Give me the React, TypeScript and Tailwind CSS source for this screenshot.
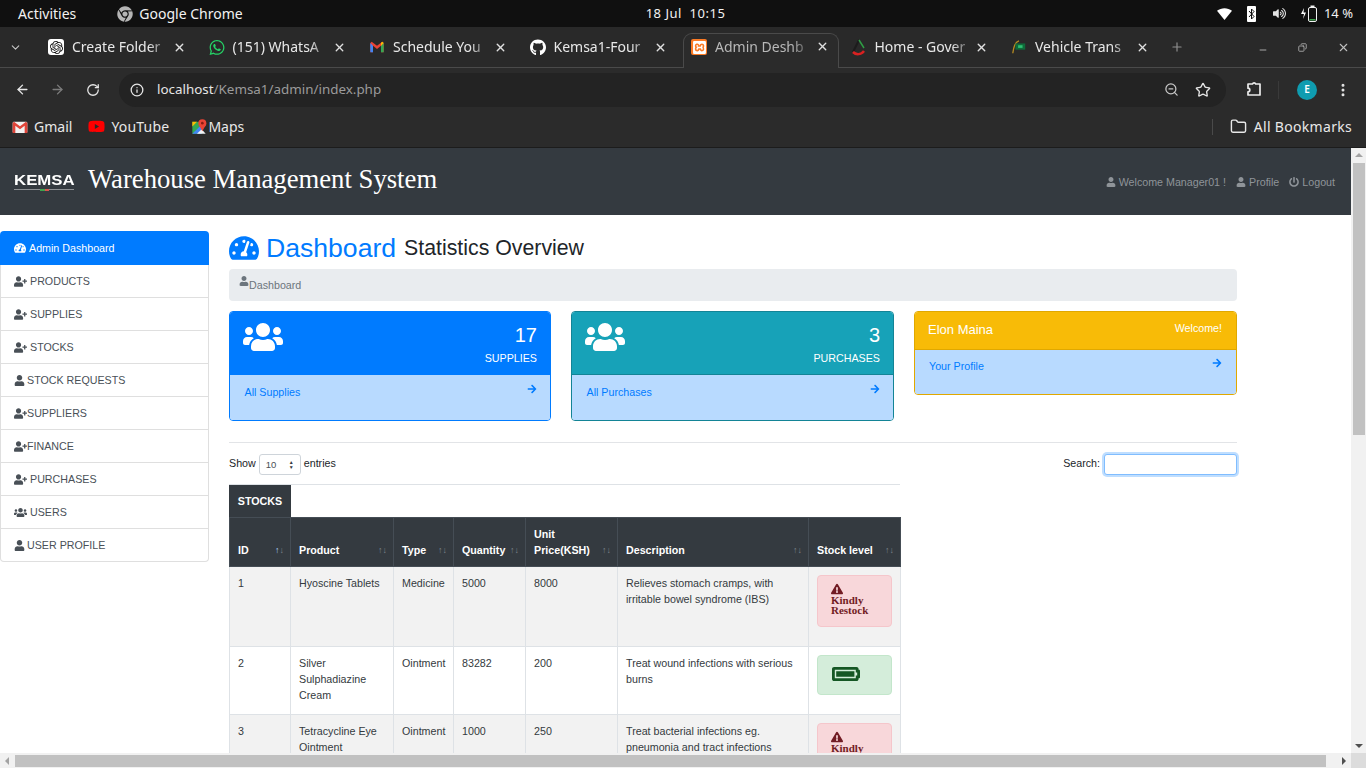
import { ArrowLeft, ArrowRight, ChevronDown, Copy, Folder, Info, Minus, MoreVertical, Plus, RotateCw, Star, X, ZoomOut } from 'lucide-react';
import { FaChrome, FaGithub, FaWhatsapp, FaYoutube } from 'react-icons/fa';
import { FaArrowRight, FaBatteryFull, FaExclamationTriangle, FaPowerOff, FaTachometerAlt, FaUser, FaUserPlus, FaUsers, FaVolumeUp } from 'react-icons/fa';
import { SiOpenai, SiXampp } from 'react-icons/si';

const chromeFont = 'font-["Noto_Sans",sans-serif]';

function GmailIcon({ size = 16 }: { size?: number }) {
  return (
    <svg width={size} height={size} viewBox="0 0 24 24">
      <path d="M2 6v14h4V10l6 5 6-5v10h4V6l-2-2-8 6-8-6z" fill="#ea4335" />
      <path d="M2 6v14h4V10z" fill="#4285f4" />
      <path d="M18 10v10h4V6z" fill="#34a853" />
      <path d="M18 10l4-4-2-2-2 1.500z" fill="#fbbc04" />
    </svg>
  );
}

// the bookmark bar shows the older envelope version of the gmail icon
function GmailBookmarkIcon() {
  return (
    <svg width="16" height="16" viewBox="0 0 24 24">
      <rect x="1" y="4" width="22" height="17" rx="2" fill="#f2f2f2" />
      <path d="M1 6v15h4V10l7 5.500 7-5.500v11h4V6l-2-2-9 7-9-7z" fill="#e0453a" />
    </svg>
  );
}

function MapsIcon() {
  return (
    <svg width="16" height="17" viewBox="0 0 24 24" className="ml-[22px]">
      <path d="M2 5h14v18H2z" fill="#34a853" />
      <path d="M2 23L16 9v14z" fill="#4285f4" />
      <path d="M2 5h7L2 12z" fill="#fbbc04" />
      <path d="M9 23l7-7 6 7z" fill="#f1f3f4" />
      <circle cx="17" cy="7" r="6" fill="#ea4335" />
      <path d="M12 10l5 9 5-9z" fill="#ea4335" />
      <circle cx="17" cy="7" r="2" fill="#8c1c13" />
    </svg>
  );
}

function HomeFavicon() {
  return (
    <svg width="16" height="18" viewBox="0 0 16 18" fill="none">
      <path d="M8 2L2 14" stroke="#1c1c1c" strokeWidth="2" />
      <path d="M8 2l5 8" stroke="#2f9e44" strokeWidth="1.500" />
      <path d="M2 14c3 3 8 3 11-1" stroke="#d92121" strokeWidth="2.500" />
    </svg>
  );
}

function VehicleFavicon() {
  return (
    <svg width="18" height="18" viewBox="0 0 18 18" fill="none">
      <path d="M2 16C3 8 5 3 9 2" stroke="#b58b22" strokeWidth="1.500" />
      <rect x="5" y="5" width="11" height="7" fill="#0f6b3a" />
      <rect x="8" y="7" width="5" height="3" fill="#2fbf71" />
    </svg>
  );
}

// chrome's extensions button, lucide's puzzle is a different shape
function ExtensionIcon() {
  return (
    <svg width="18" height="18" viewBox="0 0 18 18" fill="none" stroke="#ececec" strokeWidth="1.700" strokeLinejoin="round" className="ml-[19px]">
      <path d="M3 3h4.500a1.700 1.700 0 0 1 3.200 0H15v11H3v-3.200a1.800 1.800 0 0 0 0-3.600z" />
    </svg>
  );
}

const tabs = [
  { title: 'Create Folder', icon: <span className="flex h-[16px] w-[16px] items-center justify-center rounded-[3px] bg-white"><SiOpenai size={13} color="#111" /></span> },
  { title: '(151) WhatsA', icon: <FaWhatsapp size={17} color="#25d366" /> },
  { title: 'Schedule You', icon: <GmailIcon /> },
  { title: 'Kemsa1-Four', icon: <FaGithub size={17} color="#fff" /> },
  { title: 'Admin Deshb', icon: <span className="flex h-[16px] w-[16px] items-center justify-center rounded-[2px] bg-[#fb7a24]"><SiXampp size={13} color="#fff" /></span>, active: true },
  { title: 'Home - Gover', icon: <HomeFavicon /> },
  { title: 'Vehicle Trans', icon: <VehicleFavicon /> },
];

const sideItems = [
  { label: 'PRODUCTS', icon: <FaUserPlus size={13} />, gap: 'ml-[3px]' },
  { label: 'SUPPLIES', icon: <FaUserPlus size={13} />, gap: 'ml-[3px]' },
  { label: 'STOCKS', icon: <FaUserPlus size={13} />, gap: 'ml-[3px]' },
  { label: 'STOCK REQUESTS', icon: <FaUser size={11} />, gap: 'ml-[2px]' },
  { label: 'SUPPLIERS', icon: <FaUserPlus size={13} />, gap: '' },
  { label: 'FINANCE', icon: <FaUserPlus size={13} />, gap: '' },
  { label: 'PURCHASES', icon: <FaUserPlus size={13} />, gap: 'ml-[3px]' },
  { label: 'USERS', icon: <FaUsers size={13} />, gap: 'ml-[3px]' },
  { label: 'USER PROFILE', icon: <FaUser size={11} />, gap: 'ml-[2px]' },
];

const columns = [
  { label: 'ID', width: 'w-[61px]', active: true },
  { label: 'Product', width: 'w-[103px]' },
  { label: 'Type', width: 'w-[60px]' },
  { label: 'Quantity', width: 'w-[72px]' },
  { label: 'Unit Price(KSH)', width: 'w-[92px]' },
  { label: 'Description', width: 'w-[191px]' },
  { label: 'Stock level', width: 'w-[92px]' },
];

const rows = [
  { id: 1, product: 'Hyoscine Tablets', type: 'Medicine', qty: '5000', price: '8000', desc: 'Relieves stomach cramps, with irritable bowel syndrome (IBS)', low: true, h: 'h-[80px]' },
  { id: 2, product: 'Silver Sulphadiazine Cream', type: 'Ointment', qty: '83282', price: '200', desc: 'Treat wound infections with serious burns', low: false, h: 'h-[68px]' },
  { id: 3, product: 'Tetracycline Eye Ointment', type: 'Ointment', qty: '1000', price: '250', desc: 'Treat bacterial infections eg. pneumonia and tract infections', low: true, h: 'h-[80px]' },
];

function StatCard({ count, label, link, head, border }: { count: string; label: string; link: string; head: string; border: string }) {
  return (
    <div className={`h-[110px] overflow-hidden rounded-[4px] border ${border}`}>
      <div className={`flex h-[62px] justify-between px-[13px] pt-[9px] text-white ${head}`}>
        <FaUsers size={40} className="-mt-[4px]" />
        <div className="text-right">
          <div className="text-[20px] leading-[28px]">{count}</div>
          <div className="mt-[1px] leading-[16px]">{label}</div>
        </div>
      </div>
      <div className={`flex h-[46px] items-start justify-between border-t bg-[#b8daff] pl-[14px] pr-[14px] pt-[9px] leading-[16px] text-[#007bff] ${border}`}>
        <span className="ml-[0.500px]">{link}</span>
        <FaArrowRight size={10} className="mr-[-1px]" />
      </div>
    </div>
  );
}

function StockBadge({ low }: { low: boolean }) {
  if (low) {
    return (
      <div className="h-[52px] rounded-[4px] border border-[#f5c6cb] bg-[#f8d7da] px-[13px] pt-[7px] font-['Liberation_Serif',serif] text-[11px] leading-[10px] font-bold text-[#721c24]">
        <FaExclamationTriangle size={12} />
        <div>Kindly<br />Restock</div>
      </div>
    );
  }
  return (
    <div className="h-[40px] rounded-[4px] border border-[#c3e6cb] bg-[#d4edda] px-[14px] pt-[4px] text-[#155724]">
      <FaBatteryFull size={28} />
    </div>
  );
}

function SortArrows({ active }: { active?: boolean }) {
  return (
    <span className="-mr-[2px] ml-auto flex shrink-0 self-end pb-[2px] text-[9px] leading-[12px] text-[#7d858c]">
      <span className={active ? 'text-[#a9d0f8]' : ''}>↑</span>
      <span>↓</span>
    </span>
  );
}

export default function App() {
  return (
    <div className="flex h-screen w-full flex-col overflow-hidden bg-white">
      {/* ubuntu top bar */}
      <div className={`flex h-[27px] shrink-0 items-center bg-[#101010] text-[14px] text-[#f2f2f2] ${chromeFont}`}>
        <div className="flex flex-1 items-center pl-[18px]">
          <span>Activities</span>
          <FaChrome size={16} className="ml-[41px] text-[#b5b5b5]" />
          <span className="ml-[6px]">Google Chrome</span>
        </div>
        <div className="text-[13px] tracking-[0.5px]">18 Jul&nbsp;&nbsp;10:15</div>
        <div className="flex flex-1 items-center justify-end gap-[10px] pr-[13px]">
          <svg width="15" height="12" viewBox="0 0 14 11"><path d="M0 2.500C4-.8 10-.8 14 2.500L7 11z" fill="#fff" /></svg>
          <span className="ml-[5px] flex h-[16px] w-[9px] items-center justify-center rounded-[1px] bg-white">
            <svg width="7" height="12" viewBox="0 0 7 12" fill="none" stroke="#111" strokeWidth="1"><path d="M1 3l5 5.500-2.500 2.500V1L6 3.500 1 9" /></svg>
          </span>
          <FaVolumeUp size={13} className="ml-[7px] text-[#e4e4e4]" />
          <svg className="ml-[4px]" width="22" height="17" viewBox="0 0 22 17" fill="none">
            <path d="M4 3L1 9h3l-1 5 3-6.500H3.500z" fill="#fff" />
            <rect x="8.500" y="2.500" width="8" height="14" rx="1.500" stroke="#f2f2f2" />
            <rect x="10.500" y="0.500" width="4" height="2" fill="#f2f2f2" />
            <rect x="9.500" y="14" width="6" height="1.500" fill="#3fa34d" />
          </svg>
          <span className="-ml-[8px] text-[13px]">14 %</span>
        </div>
      </div>

      {/* tab strip */}
      <div className={`flex h-[40px] shrink-0 items-start bg-[#292929] pt-[6px] text-[14px] text-[#e8e8e8] ${chromeFont}`}>
        <div className="flex h-[28px] w-[36px] items-center justify-center text-[#c7c7c7]">
          <ChevronDown size={13} className="ml-[-6px]" />
        </div>
        {tabs.map((tab) => (
          <div
            key={tab.title}
            className={tab.active
              ? 'relative z-10 ml-[5px] flex h-[35px] w-[155.500px] items-start rounded-t-[9px] border border-b-0 border-[#4a4a4a] bg-[#2b2b2b] pl-[7px] pr-[9px] pt-[3px] text-[#b8b8b8]'
              : 'flex h-[28px] w-[160.500px] items-center pl-[12px] pr-[11px]'}
          >
            <span className="flex h-[20px] w-[16px] shrink-0 items-center justify-center">{tab.icon}</span>
            <span className="ml-[8px] w-[90px] overflow-hidden whitespace-nowrap leading-[20px] [mask-image:linear-gradient(to_right,#000_85%,#0006)]">{tab.title}</span>
            <X size={13} strokeWidth={2.5} className={tab.active ? 'ml-auto mt-[3px] text-[#e0e0e0]' : 'ml-auto text-[#e0e0e0]'} />
          </div>
        ))}
        <div className="flex h-[28px] flex-1 items-center text-[#8f8f8f]">
          <Plus size={14} strokeWidth={2} className="ml-[10px]" />
          <div className="ml-auto flex items-center gap-[30px] pr-[16px] text-[#c0c0c0]">
            <Minus size={10} className="mt-[5px]" />
            <Copy size={9} className="-scale-x-100" />
            <X size={13} />
          </div>
        </div>
      </div>

      {/* toolbar */}
      <div className={`flex h-[44px] shrink-0 items-center border-t border-[#4a4a4a] bg-[#2b2b2b] pl-[15px] pr-[15px] text-[#e6e6e6] ${chromeFont}`}>
        <ArrowLeft size={15} strokeWidth={2.2} />
        <ArrowRight size={15} strokeWidth={2.2} className="ml-[20px] text-[#7c7c7c]" />
        <RotateCw size={14} strokeWidth={2.2} className="ml-[21px]" />
        <div className="ml-[19px] flex h-[34px] w-[1107px] items-center rounded-full bg-[#232323] pl-[11px] pr-[15px]">
          <Info size={14} strokeWidth={2.2} />
          <span className="ml-[13px] text-[13.400px]">localhost<span className="text-[#9b9b9b]">/Kemsa1/admin/index.php</span></span>
          <ZoomOut size={15} className="ml-auto text-[#c8c8c8]" />
          <Star size={16} className="ml-[16px]" />
        </div>
        <ExtensionIcon />
        <span className="ml-[15px] h-[18px] w-px bg-[#3a3a3a]" />
        <span className="ml-[18px] flex h-[20px] w-[20px] items-center justify-center rounded-full bg-[#0f9cb0] text-[10px] font-semibold text-white">E</span>
        <MoreVertical size={16} strokeWidth={2.5} className="ml-[18px]" />
      </div>

      {/* bookmarks */}
      <div className={`flex h-[37px] shrink-0 items-center border-b border-[#1c1c1c] bg-[#2b2b2b] pb-[5px] pl-[12px] pr-[14px] text-[14px] text-[#e8e8e8] ${chromeFont}`}>
        <GmailBookmarkIcon />
        <span className="ml-[6px]">Gmail</span>
        <FaYoutube size={17} color="#f00" className="ml-[16px]" />
        <span className="ml-[6px] tracking-[0.2px]">YouTube</span>
        <MapsIcon />
        <span className="ml-[1px]">Maps</span>
        <span className="ml-auto h-[16px] w-px bg-[#4a4a4a]" />
        <Folder size={17} className="ml-[17px]" />
        <span className="ml-[7px] tracking-[0.3px]">All Bookmarks</span>
      </div>

      {/* page */}
      <div className="flex min-h-0 flex-1 flex-col">
        <div className="flex min-h-0 flex-1">
          <div className="min-w-0 flex-1 overflow-hidden font-['Liberation_Sans',sans-serif] text-[10.700px] leading-[16px] text-[#212529]">
            <header className="flex h-[67px] items-center bg-[#343a40] pl-[14px] pr-[16px]">
              <div className="w-[60px] text-white">
                <div className="origin-left scale-x-[1.12] text-[15px] leading-[14px] font-bold">KEMSA</div>
                <div className="mt-[2px] flex h-px w-[60px] justify-center bg-[#8d9094]">
                  <span className="h-[2px] w-[5px] bg-[#3fa34d]" />
                  <span className="h-[2px] w-[4px] bg-[#d9534f]" />
                </div>
              </div>
              <h1 className="-mt-[6px] ml-[14px] font-['Liberation_Serif',serif] text-[26.700px] leading-[32px] text-white">Warehouse Management System</h1>
              <nav className="ml-auto flex items-center text-[#8f9499]">
                <FaUser size={10} />
                <span className="ml-[3px]">Welcome Manager01 !</span>
                <FaUser size={10} className="ml-[10px]" />
                <span className="ml-[3px]">Profile</span>
                <FaPowerOff size={10} className="ml-[10px]" />
                <span className="ml-[3px]">Logout</span>
              </nav>
            </header>

            <div className="flex pt-[16px]">
              <aside className="w-[209px] shrink-0">
                <div className="flex h-[34px] items-center rounded-t-[4px] bg-[#007bff] pl-[14px] text-white">
                  <FaTachometerAlt size={12} />
                  <span className="ml-[3px]">Admin Dashboard</span>
                </div>
                <div className="rounded-b-[4px] border border-t-0 border-[#dfdfdf] text-[#495057]">
                  {sideItems.map((item) => (
                    <div key={item.label} className="flex h-[33px] items-center border-b border-[#dfdfdf] pl-[13px] last:h-[32px] last:border-b-0">
                      {item.icon}
                      <span className={item.gap}>{item.label}</span>
                    </div>
                  ))}
                </div>
              </aside>

              <main className="ml-[20px] w-[1008px] shrink-0">
                <div className="flex h-[34px] items-center">
                  <FaTachometerAlt size={30} className="text-[#007bff]" />
                  <span className="ml-[7px] text-[26.600px] leading-[32px] text-[#007bff]">Dashboard</span>
                  <span className="ml-[8px] text-[21.300px] leading-[32px]">Statistics Overview</span>
                </div>
                <div className="mt-[4px] flex h-[32px] rounded-[4px] bg-[#e9ecef] pl-[10px] pt-[8px] text-[#6c757d]">
                  <FaUser size={10} className="-mt-[1px]" />
                  <span>Dashboard</span>
                </div>

                <div className="mt-[10px] grid grid-cols-[322px_323px_323px] items-start gap-[20px]">
                  <StatCard count="17" label="SUPPLIES" link="All Supplies" head="bg-[#007bff]" border="border-[#007bff]" />
                  <StatCard count="3" label="PURCHASES" link="All Purchases" head="bg-[#17a2b8]" border="border-[#138496]" />
                  <div className="h-[84px] overflow-hidden rounded-[4px] border border-[#e0a800]">
                    <div className="flex h-[37px] items-start justify-between bg-[#f8bb07] pl-[13px] pr-[14px] pt-[9px] text-white">
                      <span className="text-[13px] leading-[18px]">Elon Maina</span>
                      <span className="-mt-[1px]">Welcome!</span>
                    </div>
                    <div className="flex h-[45px] items-start justify-between border-t border-[#e0a800] bg-[#b8daff] px-[14px] pt-[8px] text-[#007bff]">
                      <span>Your Profile</span>
                      <FaArrowRight size={10} />
                    </div>
                  </div>
                </div>

                <div className="mt-[21px] h-px bg-[#e2e4e7]" />

                <div className="mt-[11px] flex h-[21px] items-center">
                  <span className="-mt-[3px]">Show</span>
                  <span className="ml-[3px] flex h-[21px] w-[42px] items-center justify-between rounded-[3px] border border-[#ced4da] px-[6px] text-[9.500px] text-[#495057]">
                    10
                    <span className="flex flex-col text-[5px] leading-[5px] text-[#343a40]"><span>▲</span><span>▼</span></span>
                  </span>
                  <span className="-mt-[3px] ml-[3px]">entries</span>
                  <span className="-mt-[3px] ml-auto">Search:</span>
                  <span className="ml-[4px] h-[21px] w-[133px] rounded-[3px] border border-[#80bdff] bg-white shadow-[0_0_0_2px_rgba(0,123,255,0.25)]" />
                </div>

                <div className="mt-[9px] w-[671px] border-t border-[#dee2e6]">
                  <div className="flex h-[32px] w-[62px] items-center justify-center bg-[#343a40] font-bold text-white">STOCKS</div>
                </div>

                <table className="w-[672px] table-fixed border-collapse">
                  <thead>
                    <tr className="h-[49px] bg-[#343a40] text-white">
                      {columns.map((col) => (
                        <th key={col.label} className={`${col.width} border border-[#454d55] px-[8px] pb-[8px] text-left align-bottom font-bold`}>
                          <div className="flex items-end">
                            <span className={col.label.startsWith('Unit') ? 'w-[60px]' : ''}>{col.label}</span>
                            <SortArrows active={col.active} />
                          </div>
                        </th>
                      ))}
                    </tr>
                  </thead>
                  <tbody>
                    {rows.map((row, i) => (
                      <tr key={row.id} className={`${row.h} ${i % 2 === 0 ? 'bg-[#f2f2f2]' : 'bg-white'} text-[#343a40]`}>
                        <td className="border border-[#dee2e6] px-[8px] pt-[8px] align-top">{row.id}</td>
                        <td className="border border-[#dee2e6] px-[8px] pt-[8px] align-top">{row.product}</td>
                        <td className="border border-[#dee2e6] px-[8px] pt-[8px] align-top">{row.type}</td>
                        <td className="border border-[#dee2e6] px-[8px] pt-[8px] align-top">{row.qty}</td>
                        <td className="border border-[#dee2e6] px-[8px] pt-[8px] align-top">{row.price}</td>
                        <td className="border border-[#dee2e6] px-[8px] pt-[8px] align-top">{row.desc}</td>
                        <td className="border border-[#dee2e6] px-[8px] pt-[8px] align-top"><StockBadge low={row.low} /></td>
                      </tr>
                    ))}
                  </tbody>
                </table>
              </main>
            </div>
          </div>

          {/* vertical scrollbar */}
          <div className="flex w-[15px] shrink-0 flex-col items-center bg-[#f1f1f1]">
            <span className="mt-[5px] h-0 w-0 border-x-[4px] border-b-[4px] border-x-transparent border-b-[#a3a3a3]" />
            <div className="ml-[1px] mt-[6px] h-[272px] w-[12px] bg-[#c1c1c1]" />
            <span className="mt-auto mb-[5px] h-0 w-0 border-x-[4px] border-t-[4px] border-x-transparent border-t-[#505050]" />
          </div>
        </div>

        {/* horizontal scrollbar */}
        <div className="flex h-[15px] shrink-0 items-center bg-[#f1f1f1]">
          <span className="ml-[5px] h-0 w-0 border-y-[4px] border-r-[4px] border-y-transparent border-r-[#a3a3a3]" />
          <div className="ml-[6px] h-[12px] w-[1311px] bg-[#c1c1c1]" />
          <span className="ml-[16px] h-0 w-0 border-y-[4px] border-l-[4px] border-y-transparent border-l-[#505050]" />
          <span className="ml-auto h-[15px] w-[15px] bg-[#dcdcdc]" />
        </div>
      </div>
    </div>
  );
}
